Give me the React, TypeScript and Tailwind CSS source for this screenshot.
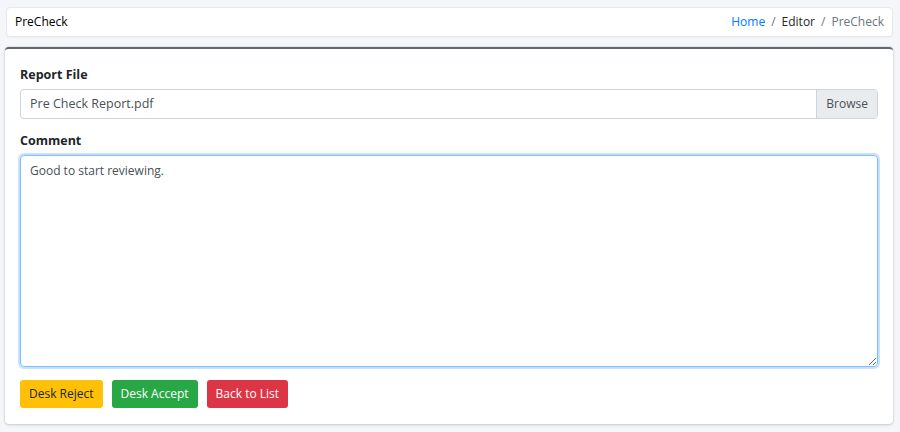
export default function App() {
  return (
    <div className="min-h-[432px] bg-[#f4f6f9] pt-[7px] pr-[7px] pb-[7px] pl-[5px] font-['Open_Sans',sans-serif] text-[#212529]">
      <div className="ml-[1px] flex h-[30px] items-center justify-between rounded-[4px] border border-[#e6e8eb] bg-white px-[8px] shadow-[0_1px_1px_rgba(0,0,0,0.03)]">
        <span className="text-[12px] text-black">PreCheck</span>
        <nav className="flex items-center gap-[6px] text-[12px]">
          <a href="#" className="text-[#007bff]">Home</a>
          <span className="text-[#6c757d]">/</span>
          <span className="text-[#212529]">Editor</span>
          <span className="text-[#6c757d]">/</span>
          <span className="text-[#6c757d]">PreCheck</span>
        </nav>
      </div>

      <div className="mt-[10px] rounded-[4px] border-t-2 border-t-[#5f6770] bg-white px-[15px] pt-[17px] pb-[16px] shadow-[0_0_2px_rgba(0,0,0,0.15),0_1px_3px_rgba(0,0,0,0.15)]">
        <label className="block text-[12.5px] font-bold">Report File</label>
        <div className="mt-[4px] flex h-[30px] rounded-[4px] border border-[#ced4da]">
          <div className="flex flex-1 items-center px-[9px] pt-[2px] text-[12.5px] text-[#495057]">
            Pre Check Report.pdf
          </div>
          <div className="flex items-center rounded-r-[3px] border-l border-[#ced4da] bg-[#e9ecef] px-[9px] pt-[1px] text-[12px] text-[#495057]">
            Browse
          </div>
        </div>

        <label className="mt-[13px] block text-[12.5px] font-bold">Comment</label>
        <textarea
          className="mt-[4px] block h-[212px] w-full rounded-[4px] border border-[#80bdff] px-[9px] py-[6px] text-[12px] text-[#495057] shadow-[0_0_0_2px_rgba(0,123,255,0.22)] outline-none"
          defaultValue="Good to start reviewing."
        />

        <div className="mt-[13px] flex gap-[9px]">
          <button className="h-[28px] rounded-[3px] bg-[#ffc107] px-[9px] text-[12px] text-[#212529]">
            Desk Reject
          </button>
          <button className="h-[28px] rounded-[3px] bg-[#28a745] px-[9px] text-[12px] text-white">
            Desk Accept
          </button>
          <button className="h-[28px] rounded-[3px] bg-[#dc3545] px-[9px] text-[12px] text-white">
            Back to List
          </button>
        </div>
      </div>
    </div>
  );
}
